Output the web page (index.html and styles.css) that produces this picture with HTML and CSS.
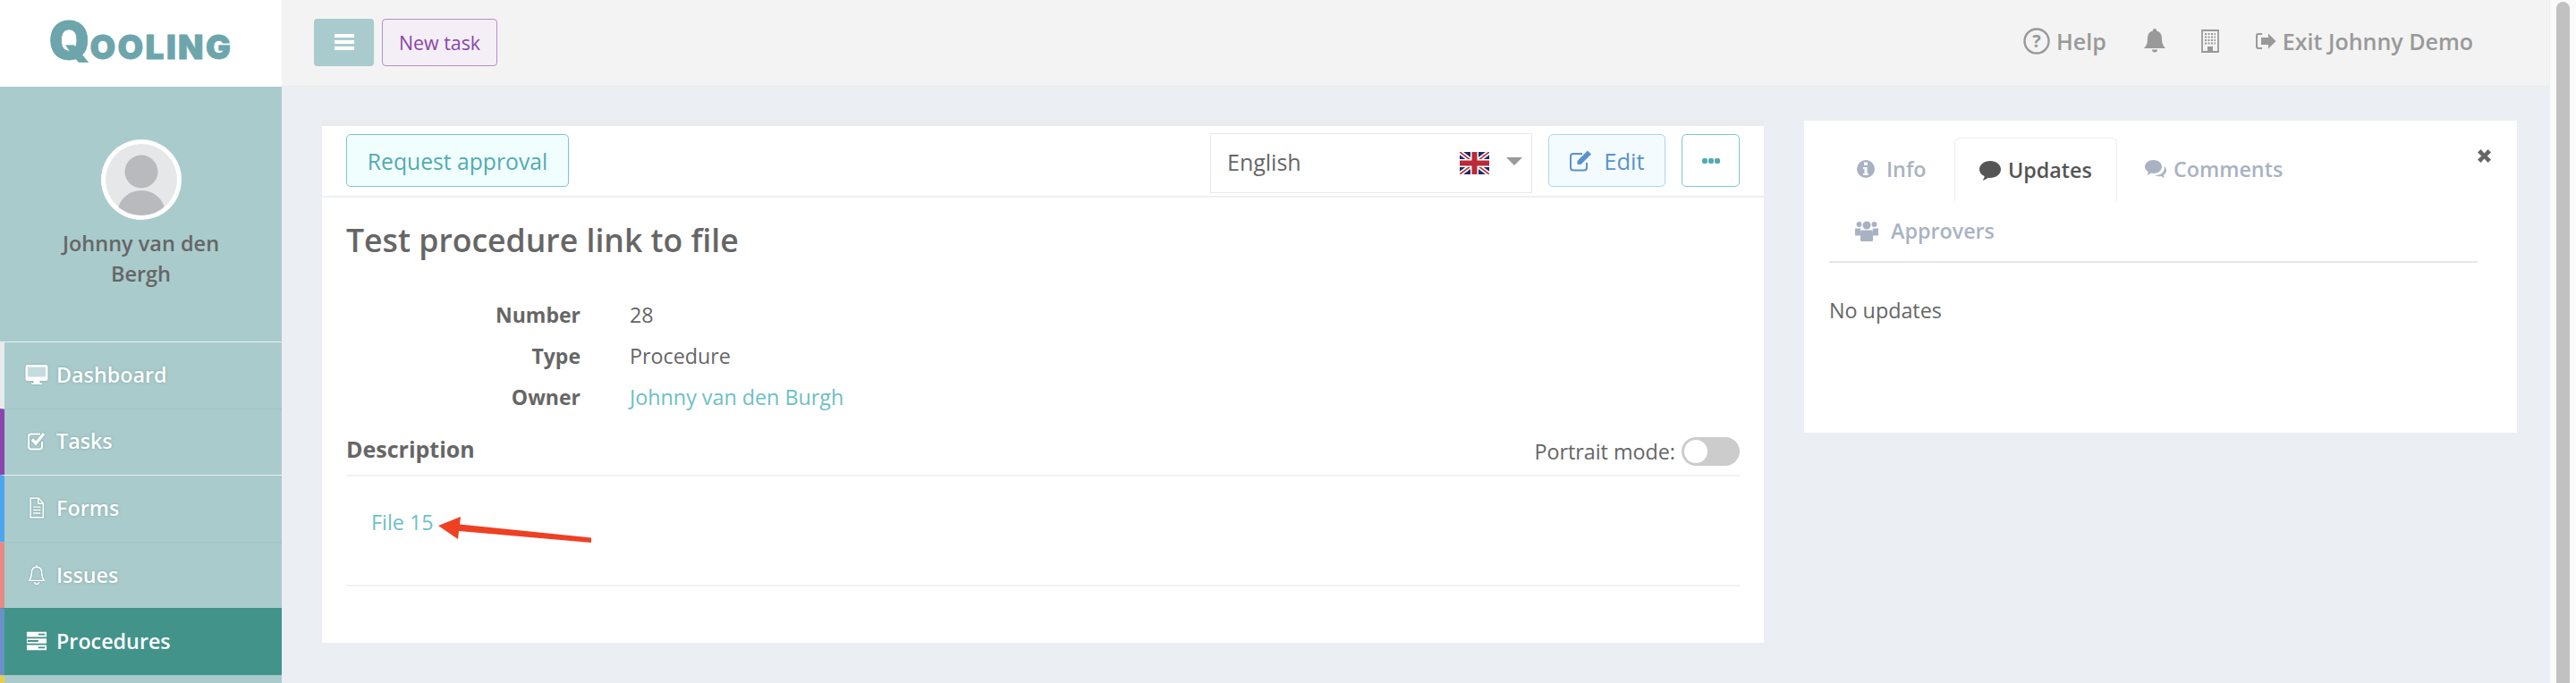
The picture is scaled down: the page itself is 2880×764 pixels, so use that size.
FILE: index.html
```html
<!DOCTYPE html>
<html lang="en">
<head>
<meta charset="utf-8">
<title>Test procedure link to file</title>
<link rel="stylesheet" href="styles.css">
</head>
<body>
<div class="app">
  <aside class="sidebar">
    <div class="logo"><span class="logo-text"><span class="logo-q">Q</span>OOLING</span></div>
    <div class="profile">
      <svg class="avatar" viewBox="0 0 90 90"><defs><clipPath id="av"><circle cx="45" cy="45" r="40"/></clipPath></defs><circle cx="45" cy="45" r="45" fill="#fff"/><circle cx="45" cy="45" r="40" fill="#e6e7e8"/><g clip-path="url(#av)" fill="#b9babe"><ellipse cx="45" cy="36" rx="18.500" ry="18.500"/><path d="M18 85c0-17 12-28 27-28s27 11 27 28v5H18z"/></g></svg>
      <div class="profile-name">Johnny van den<br>Bergh</div>
    </div>
    <nav class="nav">
      <a class="nav-item stripe-grey line-white"><svg class="nav-icon" viewBox="0 0 26 24"><path fill="#fff" d="M3 1h20a2.500 2.500 0 0 1 2.500 2.500v13A2.500 2.500 0 0 1 23 19h-6.500v2.500H19V23H7v-1.500h2.500V19H3A2.500 2.500 0 0 1 .5 16.500v-13A2.500 2.500 0 0 1 3 1z"/><rect x="3" y="3.500" width="20" height="11" fill="#c4dcdd"/></svg><span>Dashboard</span></a>
      <a class="nav-item stripe-purple"><svg class="nav-icon" viewBox="0 0 26 24"><path fill="none" stroke="#fff" stroke-width="2" d="M19 13v5.500a3 3 0 0 1-3 3H7a3 3 0 0 1-3-3v-11a3 3 0 0 1 3-3h10"/><path fill="none" stroke="#fff" stroke-width="3.400" d="M8 10.500l4 4.500 9-11"/></svg><span>Tasks</span></a>
      <a class="nav-item stripe-blue line-white"><svg class="nav-icon" viewBox="0 0 26 28"><path fill="none" stroke="#fff" stroke-width="1.700" d="M5 1.500h10.500L21.500 8v18.500H5zM15 1.500V8.500h6.500"/><path stroke="#fff" stroke-width="1.700" d="M8.500 13h9.500M8.500 17h9.500M8.500 21h9.500"/></svg><span>Forms</span></a>
      <a class="nav-item stripe-red"><svg class="nav-icon" viewBox="0 0 26 30"><path fill="none" stroke="#fff" stroke-width="1.800" d="M13 4c-5 0-7 3.500-7 8 0 6-1.500 8.500-3.500 11h21c-2-2.500-3.500-5-3.500-11 0-4.500-2-8-7-8zM13 1.500V4M10 25a3 3 0 0 0 6 0"/></svg><span>Issues</span></a>
      <a class="nav-item stripe-indigo nav-item-active"><svg class="nav-icon" viewBox="0 0 26 26"><path fill="#fff" d="M1 2h24v6H1zM1 10h24v6H1zM1 18h24v6H1z"/><path fill="#42938a" d="M15 4h8v2h-8zM2 12h13v2H2zM15 20h8v2h-8z"/></svg><span>Procedures</span></a>
      <a class="nav-item stripe-yellow"></a>
    </nav>
  </aside>
  <div class="workspace">
    <header class="topbar">
      <button class="menu-btn"><svg viewBox="0 0 22 20" class="menu-icon"><path fill="#fff" d="M0 1h22v4H0zM0 8h22v4H0zM0 15h22v4H0z"/></svg></button>
      <button class="task-btn">New task</button>
      <div class="topbar-right">
        <a class="top-link"><svg class="top-help" viewBox="0 0 30 30"><circle cx="15" cy="15" r="13.500" fill="none" stroke="#999" stroke-width="2.400"/><text x="15" y="22" text-anchor="middle" class="help-glyph">?</text></svg><span>Help</span></a>
        <svg class="top-bell" viewBox="0 0 24 28"><path fill="#999" d="M12 0a2 2 0 0 1 2 2.500c4.500 1 6 4.500 6 9 0 5 1.500 8 4 10.500H0c2.500-2.500 4-5.500 4-10.500 0-4.500 1.500-8 6-9A2 2 0 0 1 12 0zM9 23.500h6a3 3 0 0 1-6 0z"/></svg>
        <svg class="top-building" viewBox="0 0 20 26"><path fill="none" stroke="#999" stroke-width="1.800" d="M1 1h18v24H1z"/><path stroke="#999" stroke-width="1.800" stroke-dasharray="2 1.500" d="M4 5h12M4 8.500h12M4 12h12M4 15.500h12"/><path fill="#999" d="M7 19h6v6H7z"/></svg>
        <a class="top-link top-exit"><svg class="top-exit-icon" viewBox="0 0 24 22"><path fill="none" stroke="#999" stroke-width="2" d="M8 3H4a2 2 0 0 0-2 2v12a2 2 0 0 0 2 2h4"/><path fill="#999" d="M7 7h8V2.500L23.500 11 15 19.500V15H7z"/></svg><span>Exit Johnny Demo</span></a>
      </div>
    </header>
    <main class="content">
      <section class="card procedure">
        <div class="toolbar">
          <button class="btn btn-approval">Request approval</button>
          <div class="lang">
            <span class="lang-name">English</span>
            <svg class="flag" viewBox="0 0 33 25"><rect width="33" height="25" fill="#1d2a66"/><path stroke="#fff" stroke-width="5" d="M0 0l33 25M33 0L0 25"/><path stroke="#b92a37" stroke-width="1.600" d="M0 0l33 25M33 0L0 25"/><path stroke="#fff" stroke-width="9" d="M16.500 0v25M0 12.500h33"/><path stroke="#b92a37" stroke-width="6" d="M16.500 0v25M0 12.500h33"/></svg>
            <span class="lang-caret"></span>
          </div>
          <button class="btn btn-edit"><svg class="edit-icon" viewBox="0 0 26 26"><path fill="none" stroke="#5b92cc" stroke-width="2" d="M20 15v5.500a3 3 0 0 1-3 3H5a3 3 0 0 1-3-3V8a3 3 0 0 1 3-3h10"/><path fill="#5b92cc" d="M21 1.500l4 4L13.500 17H9.500v-4z"/></svg><span>Edit</span></button>
          <button class="btn btn-more"><span class="dot"></span><span class="dot"></span><span class="dot"></span></button>
        </div>
        <div class="body">
          <h1 class="title">Test procedure link to file</h1>
          <dl class="facts">
            <dt>Number</dt><dd>28</dd>
            <dt>Type</dt><dd>Procedure</dd>
            <dt>Owner</dt><dd><a class="link">Johnny van den Burgh</a></dd>
          </dl>
          <div class="desc-head">
            <h2 class="desc-title">Description</h2>
            <div class="portrait"><span>Portrait mode:</span><span class="toggle"><span class="knob"></span></span></div>
          </div>
          <div class="desc-body">
            <a class="link">File 15</a>
            <svg class="arrow" viewBox="0 0 171 30"><path fill="#ee4023" d="M0 10L25 0l-1 8.500L171 23.500v5.500L23 16l-1 9z"/></svg>
          </div>
        </div>
      </section>
      <section class="card side">
        <div class="side-head">
          <ul class="tabs">
            <li class="tab tab-info"><svg class="tab-icon" viewBox="0 0 20 24"><path fill="#a9b2c3" fill-rule="evenodd" d="M10 2a10 10 0 1 1 0 20 10 10 0 0 1 0-20zM8 4.500v3.500h4V4.500zM7 10v2h1.500v5H7v2h6v-2h-1.500v-7z"/></svg><span>Info</span></li>
            <li class="tab tab-active"><svg class="tab-icon" viewBox="0 0 24 24"><path fill="#555" d="M12 2c6.500 0 12 4 12 9.500S18.500 21 12 21c-.8 0-1.500 0-2.300-.2C8 22.300 6 23.300 3.500 24c1-1.500 2-3 2.200-5C2 17.500 0 14.700 0 11.500 0 6 5.500 2 12 2z"/></svg><span>Updates</span></li>
            <li class="tab tab-comments"><svg class="tab-icon" viewBox="0 0 24 24"><path fill="#a9b2c3" d="M9.500 2C15 2 19 5.500 19 9.500S15 17 9.500 17c-1 0-2-.1-2.800-.4C5.300 17.700 4 18.400 2.300 19c.7-1.200 1.300-2.300 1.400-3.800C1.500 13.800 0 11.800 0 9.500 0 5.500 4 2 9.500 2z"/><path fill="#a9b2c3" d="M21 8.500c2 1.200 3 3 3 5 0 2.300-1.300 4.200-3.200 5.400.1 1.300.6 2.300 1.200 3.300-1.500-.5-2.700-1.100-3.800-2.100-.9.200-1.700.2-2.700.1-1.500 0-3-.4-4.200-1 6 .1 10.500-3.500 10.500-8 0-1-.2-1.800-.8-2.700z"/></svg><span>Comments</span></li>
            <li class="tab tab-last"><svg class="tab-icon-wide" viewBox="0 0 26 24"><g fill="#a9b2c3"><circle cx="4.500" cy="5" r="3"/><circle cx="21.500" cy="5" r="3"/><circle cx="13" cy="6" r="4.500"/><path d="M0 9.500h6l1 5-1 3H0zM20 9.500h6v8h-6l-1-3z"/><path d="M7 11.500h12l1 5v6a1.500 1.500 0 0 1-1.500 1.500h-11A1.500 1.500 0 0 1 6 22.500v-6z"/></g></svg><span>Approvers</span></li>
          </ul>
          <svg class="close" viewBox="0 0 15 15"><path fill="#666" d="M3.500 0L7.500 4.500 11.500 0 15 3.500 10.700 7.500 15 11.500 11.500 15 7.500 10.500 3.500 15 0 11.500 4.300 7.500 0 3.500z"/></svg>
        </div>
        <p class="empty">No updates</p>
      </section>
    </main>
  </div>
  <div class="scrollbar"><div class="scroll-thumb"></div></div>
</div>
</body>
</html>
```

FILE: styles.css
```css
* { box-sizing: border-box; }
html, body { margin: 0; height: 100%; overflow: hidden; }
body { font-family: "Open Sans", "Liberation Sans", sans-serif; font-size: 23.3px; color: #666; background: #ebeff4; }
button { font-family: inherit; cursor: pointer; }
h1, h2, p, dl, dd, ul { margin: 0; padding: 0; }

.app { display: flex; width: 2880px; height: 764px; overflow: hidden; }

/* Sidebar */
.sidebar { width: 315px; flex: none; background: #a9cbcc; display: flex; flex-direction: column; overflow: hidden; }
.logo { height: 97px; flex: none; background: #fff; display: flex; align-items: center; justify-content: center; }
.logo-text { font-family: "Inter", sans-serif; font-weight: 900; font-size: 37px; color: #6ca5ab; line-height: 97px; letter-spacing: 2.400px; -webkit-text-stroke: .8px #6ca5ab; }
.logo-q { font-size: 58px; letter-spacing: 0; }
.profile { height: 285px; flex: none; display: flex; flex-direction: column; align-items: center; padding-top: 59px; }
.avatar { width: 90px; height: 90px; display: block; }
.profile-name { margin-top: 9px; text-align: center; font-weight: 600; font-size: 23.5px; line-height: 34px; color: #666; }
.nav { display: flex; flex-direction: column; flex: none; }
.nav-item { height: 74.6px; flex: none; display: flex; align-items: center; border-left: 5px solid transparent; border-top: 1px solid #9fc4c5; padding: 0 0 2px 23px; color: #fff; font-weight: 600; font-size: 23.3px; text-shadow: 0 0 3px rgba(90, 130, 130, .55); }
.nav-icon { width: 26px; height: 24px; margin-right: 9px; flex: none; filter: drop-shadow(0 0 1px rgba(90, 130, 130, .5)); }
.line-white { border-top-color: #e9f2f2; }
.stripe-grey { border-left-color: #e8e9ec; }
.stripe-purple { border-left-color: #8a44ad; }
.stripe-blue { border-left-color: #4ea5ef; }
.stripe-red { border-left-color: #e58a85; }
.stripe-indigo { border-left-color: #6a90c8; }
.stripe-yellow { border-left-color: #e5cf4a; }
.nav-item-active { background: #42938a; border-top-color: #42938a; text-shadow: none; }

/* Top bar */
.workspace { width: 2535px; flex: none; display: flex; flex-direction: column; }
.topbar { height: 97px; flex: none; background: #f3f3f3; border-bottom: 1px solid #ebebeb; display: flex; align-items: center; padding: 0 85px 2px 36px; }
.menu-btn { width: 67px; height: 53px; background: #a9cbcd; border: 0; border-radius: 4px; display: flex; align-items: center; justify-content: center; padding: 0; }
.menu-icon { width: 22px; height: 20px; }
.task-btn { width: 129px; height: 53px; margin-left: 9px; background: #f4eff6; border: 1px solid #b48fc8; border-radius: 4px; color: #8a44ad; font-size: 21.400px; padding: 0; }
.topbar-right { margin: -2px 0 0 auto; display: flex; align-items: center; color: #999; font-weight: 600; font-size: 25px; }
.top-link { display: flex; align-items: center; }
.top-help { width: 30px; height: 30px; margin-right: 7px; }
.help-glyph { font-family: "Open Sans", sans-serif; font-weight: 700; font-size: 20px; fill: #999; }
.top-bell { width: 24px; height: 28px; margin-left: 42px; }
.top-building { width: 20px; height: 26px; margin-left: 40px; }
.top-exit { margin-left: 40px; }
.top-exit-icon { width: 24px; height: 22px; margin-right: 7px; }

/* Content */
.content { flex: 1; display: flex; align-items: flex-start; padding: 37px 0 0 45px; gap: 45px; }
.card { background: #fff; }
.procedure { width: 1612px; height: 585px; border-top: 7px solid #e9ebec; }
.toolbar { height: 80px; border-bottom: 2px solid #eef0f1; display: flex; align-items: flex-start; padding: 9px 27px 0; }
.btn { height: 59px; border-radius: 5px; padding: 1px 0 0; font-size: 24.700px; display: flex; align-items: center; justify-content: center; }
.btn-approval { width: 249px; background: #f1fefe; border: 1px solid #7cc7cc; color: #52abb1; }
.lang { width: 360px; height: 67px; margin: -1px 0 0 auto; border: 1px solid #e8e8e8; display: flex; align-items: center; padding: 0 10px 0 18px; font-size: 25px; }
.lang-name { flex: 1; color: #666; padding-bottom: 3px; }
.flag { width: 33px; height: 25px; margin-right: 19px; }
.lang-caret { width: 0; height: 0; border-left: 9px solid transparent; border-right: 9px solid transparent; border-top: 9px solid #999; margin-top: -4px; }
.btn-edit { width: 131px; margin-left: 18px; background: #f3fbfe; border: 1px solid #a6d9ec; color: #5b92cc; gap: 13px; font-size: 25.500px; padding: 0; }
.edit-icon { width: 26px; height: 26px; }
.btn-more { width: 65px; margin-left: 18px; background: #fff; border: 1px solid #7cc7cc; gap: 1px; padding: 0; }
.dot { width: 6px; height: 6px; border-radius: 2px; background: #52abb1; }
.body { padding: 0 27px; }
.title { font-size: 35.600px; font-weight: 600; line-height: 48px; color: #666; margin-top: 23px; }
.facts { display: grid; grid-template-columns: 262px 1fr; column-gap: 55px; row-gap: 0; margin-top: 37px; }
.facts dt { text-align: right; font-weight: 700; font-size: 23px; line-height: 46px; }
.facts dd { line-height: 46px; }
.link { color: #6cc0c6; }
.desc-head { height: 46px; margin-top: 20px; border-bottom: 2px solid #f0f1f2; display: flex; align-items: flex-start; justify-content: space-between; }
.desc-title { font-size: 25px; font-weight: 700; line-height: 30px; color: #666; }
.portrait { display: flex; align-items: center; gap: 7px; margin-top: 2px; }
.toggle { width: 65px; height: 32px; border-radius: 16px; background: #ccc; padding: 3px; display: block; }
.knob { width: 26px; height: 26px; border-radius: 50%; background: #fff; display: block; }
.desc-body { position: relative; height: 123px; border-bottom: 2px solid #f0f1f2; padding: 34px 0 0 28px; line-height: 34px; }
.arrow { position: absolute; left: 103px; top: 45px; width: 171px; height: 30px; }

.side { width: 797px; height: 349px; position: relative; padding: 19px 28px; margin-top: 1px; }
.side-head { display: flex; align-items: flex-start; }
.tabs { width: 725px; flex: none; display: flex; flex-wrap: wrap; list-style: none; border-bottom: 2px solid #e5e6e8; }
.tab { display: flex; align-items: center; height: 71px; padding: 0 28px 1px; color: #a9b2c3; font-weight: 600; border: 1px solid transparent; }
.tab-info { width: 140px; }
.tab-active { width: 182px; padding: 0 0 1px 27px; color: #555; border-color: #eceded; border-bottom: 0; border-radius: 6px 6px 0 0; }
.tab-comments { padding-left: 30px; }
.tab-last { height: 67px; }
.tab-icon { width: 24px; height: 24px; margin-right: 8px; flex: none; }
.tab-icon-wide { width: 26px; height: 24px; margin-right: 14px; flex: none; }
.tab-info .tab-icon { margin-right: 11px; }
.close { width: 15px; height: 15px; margin-top: 13px; flex: none; }
.empty { margin-top: 36px; line-height: 34px; }

.scrollbar { width: 30px; flex: none; background: #fafafa; border-left: 1px solid #efefef; padding: 2px 7px 0; }
.scroll-thumb { width: 15px; height: 800px; border-radius: 8px; background: #c1c1c1; }
```
